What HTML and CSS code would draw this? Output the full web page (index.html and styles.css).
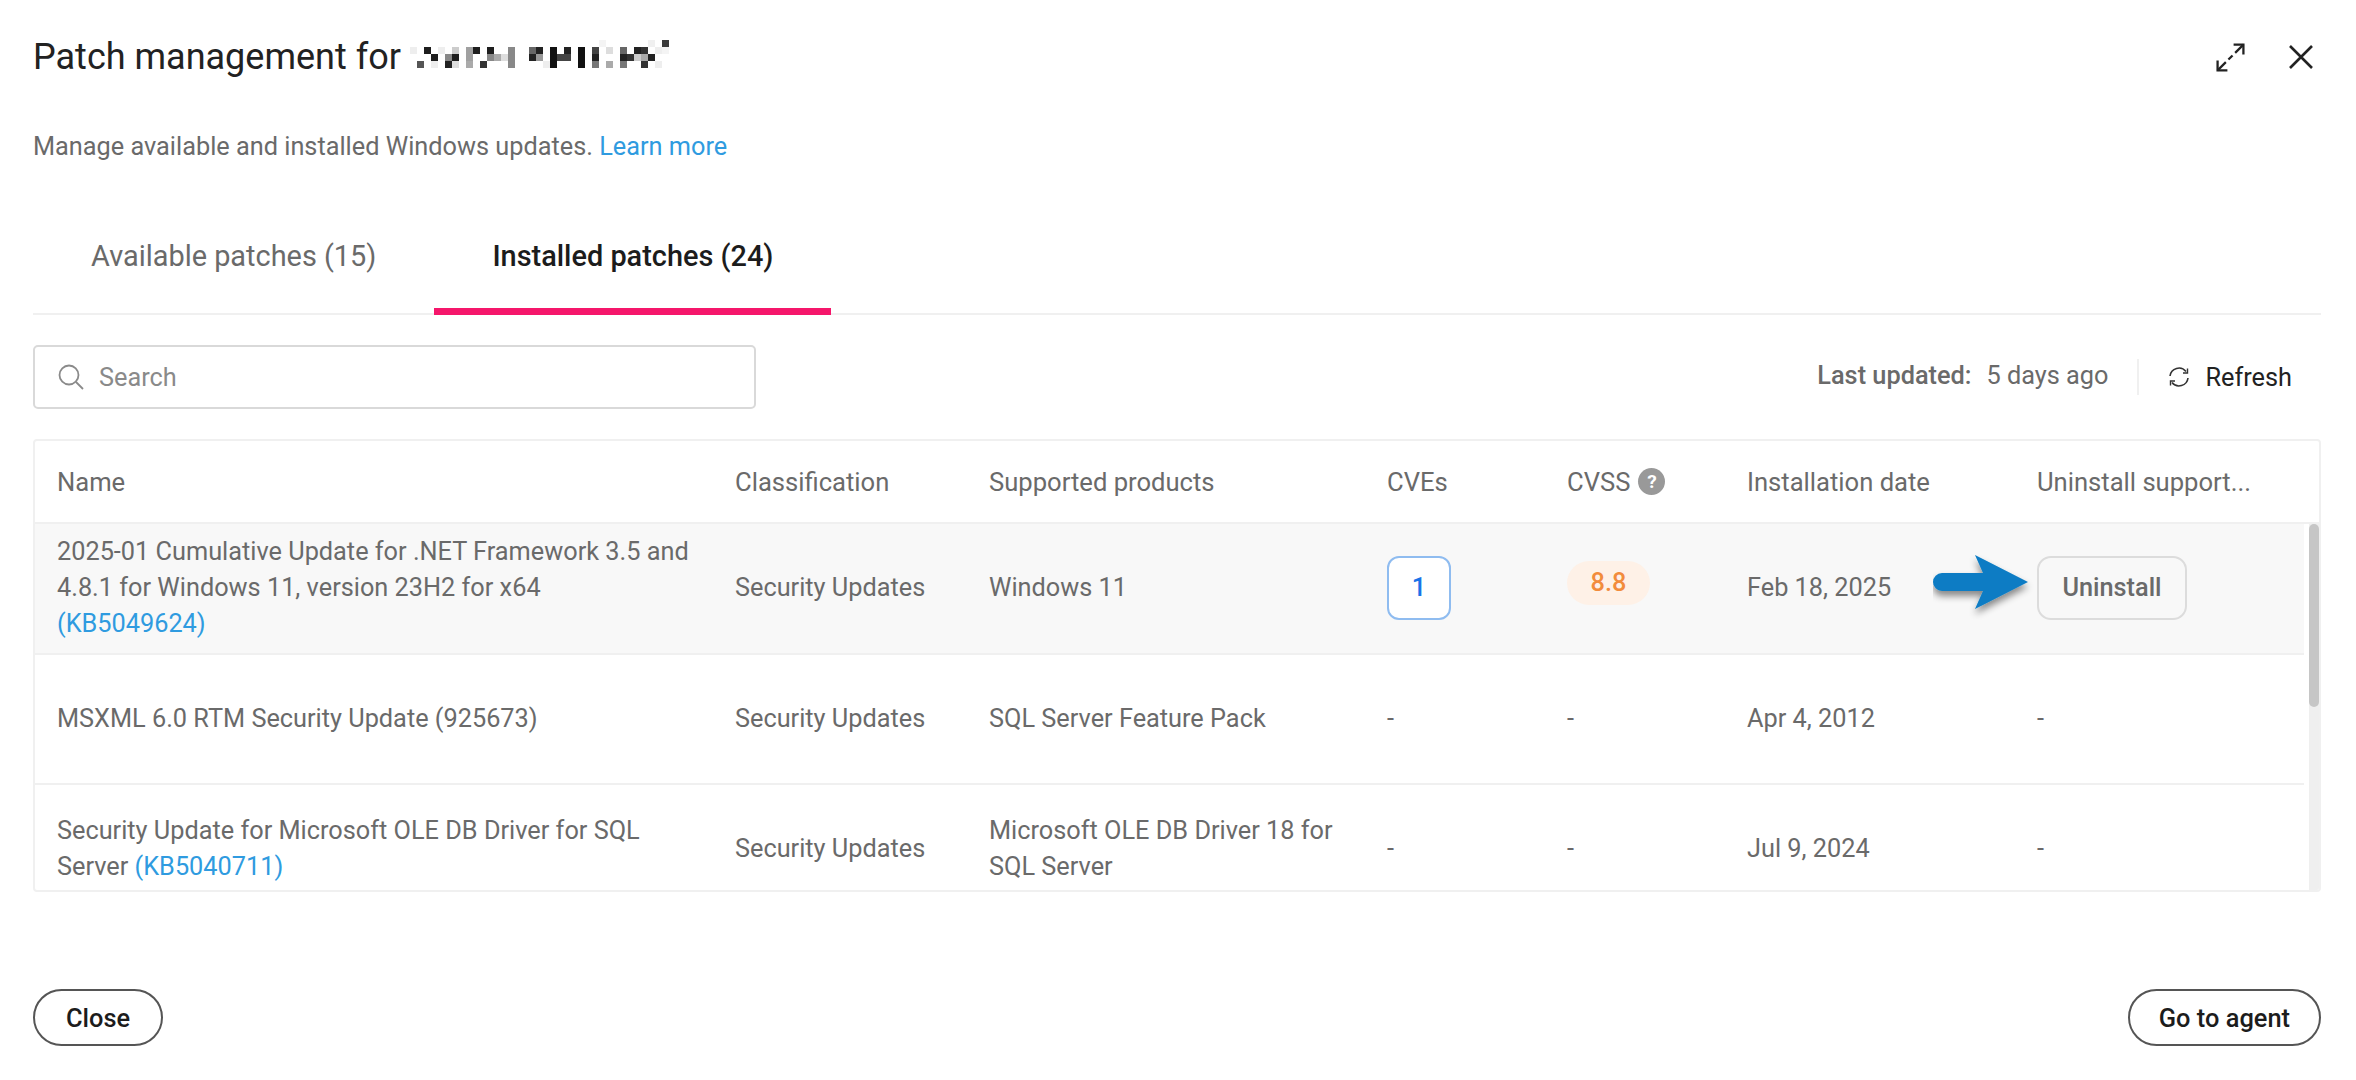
FILE: index.html
```html
<!DOCTYPE html>
<html lang="en">
<head>
    <meta charset="UTF-8">
    <meta name="viewport" content="width=device-width, initial-scale=1.0">
    <title>Patch management</title>
    <link rel="stylesheet" href="styles.css">
</head>
<body>
    <div class="dialog">
        <!-- Title bar -->
        <div class="title-bar">
            <h1 class="title">Patch management for</h1>
            <svg class="mosaic" viewBox="0 0 38 4" width="266" height="28" shape-rendering="crispEdges">
                <rect x="28" y="0" width="1" height="1" fill="#f4f4f4"/>
                <rect x="35" y="0" width="1" height="1" fill="#f0f0f0"/>
                <rect x="37" y="0" width="1" height="1" fill="#3a3a3a"/>
                <rect x="1" y="1" width="1" height="1" fill="#eeeeee"/>
                <rect x="3" y="1" width="1" height="1" fill="#1e1e1e"/>
                <rect x="5" y="1" width="1" height="1" fill="#eeeeee"/>
                <rect x="7" y="1" width="1" height="1" fill="#cccccc"/>
                <rect x="9" y="1" width="1" height="1" fill="#a0a0a0"/>
                <rect x="10" y="1" width="1" height="1" fill="#1e1e1e"/>
                <rect x="12" y="1" width="1" height="1" fill="#1e1e1e"/>
                <rect x="15" y="1" width="1" height="1" fill="#888888"/>
                <rect x="18" y="1" width="1" height="1" fill="#666666"/>
                <rect x="19" y="1" width="1" height="1" fill="#222222"/>
                <rect x="21" y="1" width="1" height="1" fill="#111111"/>
                <rect x="23" y="1" width="1" height="1" fill="#222222"/>
                <rect x="25" y="1" width="1" height="1" fill="#111111"/>
                <rect x="27" y="1" width="1" height="1" fill="#444444"/>
                <rect x="29" y="1" width="1" height="1" fill="#dddddd"/>
                <rect x="31" y="1" width="1" height="1" fill="#666666"/>
                <rect x="33" y="1" width="1" height="1" fill="#222222"/>
                <rect x="34" y="1" width="1" height="1" fill="#333333"/>
                <rect x="36" y="1" width="1" height="1" fill="#eeeeee"/>
                <rect x="37" y="1" width="1" height="1" fill="#f4f4f4"/>
                <rect x="4" y="2" width="1" height="1" fill="#1e1e1e"/>
                <rect x="6" y="2" width="1" height="1" fill="#888888"/>
                <rect x="7" y="2" width="1" height="1" fill="#1e1e1e"/>
                <rect x="9" y="2" width="1" height="1" fill="#a0a0a0"/>
                <rect x="12" y="2" width="1" height="1" fill="#888888"/>
                <rect x="13" y="2" width="1" height="1" fill="#aaaaaa"/>
                <rect x="14" y="2" width="1" height="1" fill="#dddddd"/>
                <rect x="15" y="2" width="1" height="1" fill="#888888"/>
                <rect x="18" y="2" width="1" height="1" fill="#222222"/>
                <rect x="19" y="2" width="1" height="1" fill="#999999"/>
                <rect x="21" y="2" width="1" height="1" fill="#111111"/>
                <rect x="22" y="2" width="2" height="1" fill="#444444"/>
                <rect x="25" y="2" width="1" height="1" fill="#111111"/>
                <rect x="27" y="2" width="1" height="1" fill="#222222"/>
                <rect x="31" y="2" width="1" height="1" fill="#222222"/>
                <rect x="32" y="2" width="1" height="1" fill="#333333"/>
                <rect x="33" y="2" width="1" height="1" fill="#cccccc"/>
                <rect x="34" y="2" width="1" height="1" fill="#aaaaaa"/>
                <rect x="35" y="2" width="1" height="1" fill="#222222"/>
                <rect x="2" y="3" width="1" height="1" fill="#555555"/>
                <rect x="4" y="3" width="1" height="1" fill="#eeeeee"/>
                <rect x="6" y="3" width="1" height="1" fill="#222222"/>
                <rect x="7" y="3" width="1" height="1" fill="#dddddd"/>
                <rect x="9" y="3" width="1" height="1" fill="#aaaaaa"/>
                <rect x="11" y="3" width="1" height="1" fill="#333333"/>
                <rect x="15" y="3" width="1" height="1" fill="#888888"/>
                <rect x="20" y="3" width="1" height="1" fill="#eeeeee"/>
                <rect x="21" y="3" width="1" height="1" fill="#111111"/>
                <rect x="25" y="3" width="1" height="1" fill="#111111"/>
                <rect x="27" y="3" width="1" height="1" fill="#777777"/>
                <rect x="29" y="3" width="1" height="1" fill="#aaaaaa"/>
                <rect x="31" y="3" width="1" height="1" fill="#777777"/>
                <rect x="34" y="3" width="1" height="1" fill="#333333"/>
                <rect x="36" y="3" width="1" height="1" fill="#eeeeee"/>
            </svg>
            <div class="title-icons">
                <svg class="icon-expand" viewBox="0 0 30 30" width="31" height="31" fill="none" stroke="#222" stroke-width="2.2">
                    <path d="M18 2.500h9.500V12"/>
                    <path d="M27.500 2.500l-8 8"/>
                    <path d="M17 13l-4 4"/>
                    <path d="M10.500 19.500l-8 8"/>
                    <path d="M2.500 18v9.500H12"/>
                </svg>
                <svg class="icon-close" viewBox="0 0 24 24" width="24" height="24" fill="none" stroke="#222" stroke-width="2.6">
                    <path d="M1 1l22 22M23 1L1 23"/>
                </svg>
            </div>
        </div>

        <p class="intro">Manage available and installed Windows updates. <a href="#">Learn more</a></p>

        <!-- Tabs -->
        <div class="tabs">
            <div class="tab">Available patches (15)</div>
            <div class="tab active">Installed patches (24)</div>
        </div>

        <!-- Search and refresh -->
        <div class="toolbar">
            <div class="search">
                <svg viewBox="0 0 26 26" width="26" height="26" fill="none" stroke="#8a8a8a" stroke-width="1.8">
                    <circle cx="11" cy="11" r="9.500"/>
                    <path d="M18 18l7 7"/>
                </svg>
                <span>Search</span>
            </div>
            <div class="status">
                <span class="status-label">Last updated:</span>
                <span class="status-value">5 days ago</span>
                <span class="divider"></span>
                <span class="refresh">
                    <svg viewBox="0 0 22 22" width="22" height="22" fill="none" stroke="#333" stroke-width="1.6">
                        <path d="M2 10a9 9 0 0 1 16-4.500"/>
                        <path d="M20 12a9 9 0 0 1-16 4.500"/>
                        <path d="M19.500 2.500v4.500h-4.500" stroke-width="1.4"/>
                        <path d="M2.500 19.500v-4.500h4.500" stroke-width="1.4"/>
                    </svg>
                    Refresh
                </span>
            </div>
        </div>

        <!-- Patch table -->
        <div class="table">
            <div class="row head">
                <div class="cell">Name</div>
                <div class="cell">Classification</div>
                <div class="cell">Supported products</div>
                <div class="cell">CVEs</div>
                <div class="cell">CVSS <span class="help">?</span></div>
                <div class="cell">Installation date</div>
                <div class="cell">Uninstall support...</div>
            </div>
            <div class="table-body">
                <div class="rows">
                    <div class="row highlighted">
                        <div class="cell name">2025-01 Cumulative Update for .NET Framework 3.5 and 4.8.1 for Windows 11, version 23H2 for x64 <a href="#">(KB5049624)</a></div>
                        <div class="cell">Security Updates</div>
                        <div class="cell product">Windows 11</div>
                        <div class="cell"><span class="cve">1</span></div>
                        <div class="cell"><span class="score">8.8</span></div>
                        <div class="cell">Feb 18, 2025</div>
                        <div class="cell"><span class="uninstall">Uninstall</span></div>
                        <svg class="arrow" viewBox="0 0 110 74" width="110" height="74">
                            <defs>
                                <filter id="arrow-shadow" x="-20%" y="-30%" width="140%" height="170%">
                                    <feDropShadow dx="0" dy="5" stdDeviation="3.500" flood-color="#000" flood-opacity="0.45"/>
                                </filter>
                            </defs>
                            <path d="M9 18H50L42 0l53 27-53 27 8-18H9a9 9 0 0 1 0-18z" fill="#0a7cc4" filter="url(#arrow-shadow)"/>
                        </svg>
                    </div>
                    <div class="row">
                        <div class="cell name">MSXML 6.0 RTM Security Update (925673)</div>
                        <div class="cell">Security Updates</div>
                        <div class="cell product">SQL Server Feature Pack</div>
                        <div class="cell">-</div>
                        <div class="cell">-</div>
                        <div class="cell">Apr 4, 2012</div>
                        <div class="cell">-</div>
                    </div>
                    <div class="row">
                        <div class="cell name">Security Update for Microsoft OLE DB Driver for SQL Server <a href="#">(KB5040711)</a></div>
                        <div class="cell">Security Updates</div>
                        <div class="cell product">Microsoft OLE DB Driver 18 for SQL Server</div>
                        <div class="cell">-</div>
                        <div class="cell">-</div>
                        <div class="cell">Jul 9, 2024</div>
                        <div class="cell">-</div>
                    </div>
                </div>
                <div class="scrollbar"><div class="thumb"></div></div>
            </div>
        </div>

        <!-- Footer -->
        <div class="footer">
            <button class="pill">Close</button>
            <button class="pill">Go to agent</button>
        </div>
    </div>
</body>
</html>
```

FILE: styles.css
```css
* {
    box-sizing: border-box;
}
body {
    margin: 0;
    background: #fff;
    font-family: 'Roboto', Arial, sans-serif;
    font-size: 25.3px;
    color: #6a6a6a;
}
a {
    color: #2f9be0;
    text-decoration: none;
}
.dialog {
    width: 2356px;
    height: 1080px;
    padding: 36px 35px 0 33px;
    display: flex;
    flex-direction: column;
}
.title-bar {
    display: flex;
    align-items: center;
    height: 42px;
}
.title {
    margin: 0;
    font-size: 36px;
    font-weight: 400;
    line-height: 42px;
    color: #222;
}
.mosaic {
    margin: -6px 0 0 2px;
}
.title-icons {
    margin-left: auto;
    display: flex;
    align-items: center;
    gap: 43px;
    padding-right: 8px;
}
.intro {
    margin: 50px 0 0 0;
    line-height: 37px;
}
.tabs {
    margin-top: 56px;
    display: flex;
    border-bottom: 2px solid #f0f0f0;
    height: 94px;
}
.tab {
    padding: 17px 58px 0 58px;
    font-size: 28.9px;
    line-height: 36px;
    height: 94px;
}
.tab.active {
    color: #1c1c1c;
    font-weight: 500;
    border-bottom: 7px solid #f5166b;
}
.toolbar {
    margin-top: 30px;
    display: flex;
    justify-content: space-between;
    align-items: center;
    height: 64px;
}
.search {
    width: 723px;
    height: 64px;
    border: 2px solid #d9d9d9;
    border-radius: 5px;
    padding-left: 23px;
    display: flex;
    align-items: center;
    gap: 15px;
    color: #8a8a8a;
}
.status {
    display: flex;
    align-items: center;
    padding-right: 29px;
}
.status-label {
    font-weight: 500;
    margin-top: -4px;
}
.status-value {
    margin-left: 15px;
    margin-top: -4px;
}
.divider {
    width: 2px;
    height: 36px;
    background: #f0f0f0;
    margin: 0 29px;
}
.refresh {
    display: flex;
    align-items: center;
    gap: 15px;
    color: #222;
}
.table {
    margin-top: 30px;
    height: 453px;
    border: 2px solid #f0f0f0;
    border-radius: 4px;
    overflow: hidden;
    display: flex;
    flex-direction: column;
}
.row {
    position: relative;
    display: grid;
    grid-template-columns: 678px 254px 398px 180px 180px 290px 1fr;
    padding-left: 22px;
    height: 130.5px;
    flex-shrink: 0;
    border-bottom: 2px solid #f0f0f0;
    line-height: 36px;
}
.row.head {
    height: 83px;
    font-size: 25.6px;
}
.row.highlighted {
    background: #f8f8f8;
}
.cell {
    display: flex;
    align-items: center;
}
.cell.name {
    display: block;
    align-self: center;
    padding-right: 44px;
}
.cell.product {
    display: block;
    align-self: center;
    padding-right: 30px;
}
.help {
    width: 27px;
    height: 27px;
    margin-left: 8px;
    border-radius: 50%;
    background: #999;
    color: #fff;
    font-size: 19px;
    font-weight: 700;
    line-height: 27px;
    text-align: center;
}
.table-body {
    flex: 1;
    min-height: 0;
    display: flex;
}
.rows {
    flex: 1;
    min-width: 0;
    overflow: hidden;
}
.scrollbar {
    width: 10px;
    margin-left: 5px;
    background: #efefef;
}
.thumb {
    height: 183px;
    border-radius: 5px;
    background: #c6c6c6;
}
.cve {
    width: 64px;
    height: 64px;
    border: 2px solid #8fbcf0;
    border-radius: 12px;
    background: #fff;
    color: #1a73e8;
    font-weight: 500;
    display: flex;
    align-items: center;
    justify-content: center;
}
.score {
    width: 83px;
    height: 44px;
    margin-top: -10px;
    border-radius: 22px;
    background: #fef1e7;
    color: #f28c3c;
    font-weight: 500;
    display: flex;
    align-items: center;
    justify-content: center;
}
.uninstall {
    width: 150px;
    height: 64px;
    border: 2px solid #dcdcdc;
    border-radius: 14px;
    color: #6a6a6a;
    font-weight: 500;
    display: flex;
    align-items: center;
    justify-content: center;
}
.arrow {
    position: absolute;
    left: 1898px;
    top: 31px;
}
.footer {
    margin-top: 97px;
    display: flex;
    justify-content: space-between;
}
.pill {
    min-width: 130px;
    height: 57px;
    padding: 0 29px;
    border: 2px solid #555;
    border-radius: 29px;
    background: #fff;
    color: #1c1c1c;
    font-family: inherit;
    font-size: 25.4px;
    font-weight: 500;
}
```
